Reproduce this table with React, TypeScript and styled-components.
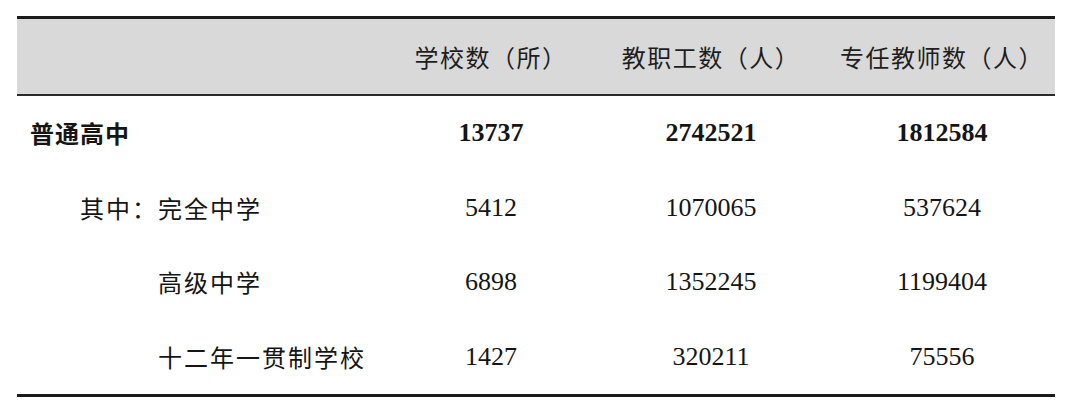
import React from "react";
import styled, { createGlobalStyle } from "styled-components";

const Global = createGlobalStyle`
  html, body { margin: 0; padding: 0; background: #ffffff; }
  body { width: 1080px; height: 416px; overflow: hidden; }
`;

const Page = styled.div`
  padding: 16px 0 0 17px;
`;

const Table = styled.div`
  width: 1038px;
  border-top: 3px solid #1b1b1b;
  border-bottom: 3px solid #1b1b1b;
  display: flex;
  flex-direction: column;
`;

const Row = styled.div<{ $head?: boolean }>`
  display: grid;
  grid-template-columns: 372px 204px 236px 226px;
  height: ${(p) => (p.$head ? "75px" : "74.5px")};
  align-items: center;
  background: ${(p) => (p.$head ? "#d9d9d9" : "#ffffff")};
  border-bottom: ${(p) => (p.$head ? "2px solid #2a2a2a" : "none")};
`;

const HeadCell = styled.div`
  font-family: "Noto Sans CJK SC", "Noto Sans", sans-serif;
  font-size: 24px;
  line-height: 1;
  letter-spacing: 1.5px;
  color: #1e1e1e;
  text-align: center;
  white-space: nowrap;
`;

const Label = styled.div<{ $indent: number; $bold?: boolean }>`
  font-family: "Noto Sans CJK SC", "Noto Sans", sans-serif;
  font-size: 24px;
  line-height: 1;
  font-weight: ${(p) => (p.$bold ? 700 : 400)};
  letter-spacing: ${(p) => (p.$bold ? "1px" : "2px")};
  color: #151515;
  padding-left: ${(p) => p.$indent}px;
  white-space: nowrap;
`;

const Num = styled.div<{ $bold?: boolean }>`
  font-family: "Liberation Serif", "Times New Roman", serif;
  font-size: 26px;
  line-height: 1;
  font-weight: ${(p) => (p.$bold ? 700 : 400)};
  color: #151515;
  text-align: center;
`;

type Item = { label: string; indent: number; bold?: boolean; values: string[] };

const rows: Item[] = [
  { label: "普通高中", indent: 13, bold: true, values: ["13737", "2742521", "1812584"] },
  { label: "其中：完全中学", indent: 63, values: ["5412", "1070065", "537624"] },
  { label: "高级中学", indent: 141, values: ["6898", "1352245", "1199404"] },
  { label: "十二年一贯制学校", indent: 141, values: ["1427", "320211", "75556"] },
];

const heads = ["学校数（所）", "教职工数（人）", "专任教师数（人）"];

export default function App() {
  return (
    <>
      <Global />
      <Page>
        <Table>
          <Row $head>
            <div />
            {heads.map((h) => (
              <HeadCell key={h}>{h}</HeadCell>
            ))}
          </Row>
          {rows.map((r) => (
            <Row key={r.label}>
              <Label $indent={r.indent} $bold={r.bold}>
                {r.label}
              </Label>
              {r.values.map((v, i) => (
                <Num key={i} $bold={r.bold}>
                  {v}
                </Num>
              ))}
            </Row>
          ))}
        </Table>
      </Page>
    </>
  );
}
